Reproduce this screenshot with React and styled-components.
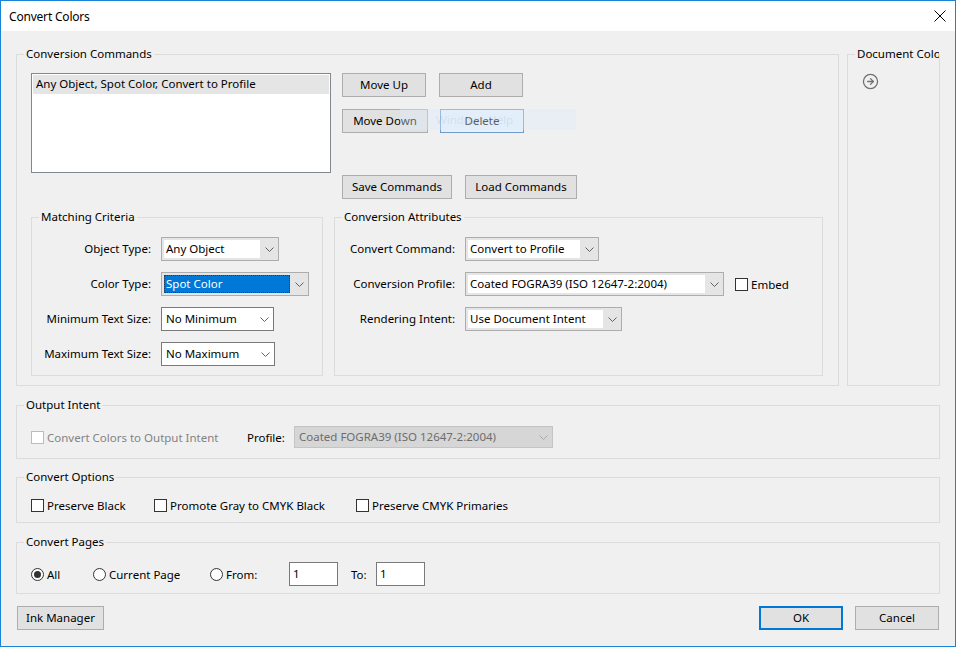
import React from 'react';
import styled, { createGlobalStyle } from 'styled-components';
import { CircleArrowRight } from 'lucide-react';

const GlobalStyle = createGlobalStyle`
  html, body { margin: 0; padding: 0; background: #f0f0f0; }
  body {
    font-family: "Noto Sans", "Open Sans", sans-serif;
    font-size: 11.5px;
    color: #000;
  }
  * { box-sizing: border-box; }
`;

const Window = styled.div`
  width: 956px;
  height: 647px;
  border: 1px solid #1883d7;
  background: #f0f0f0;
  display: flex;
  flex-direction: column;
  overflow: hidden;
`;

const TitleBar = styled.div`
  height: 30px;
  flex-shrink: 0;
  background: #fff;
  display: flex;
  align-items: center;
  justify-content: space-between;
  padding: 0 9px 0 8px;
`;

const Title = styled.span`
  font-size: 12px;
  letter-spacing: -0.2px;
`;

const Body = styled.div`
  flex: 1;
  display: flex;
  flex-direction: column;
  padding: 15px 15px 0 15px;
`;

const TopRow = styled.div`
  display: flex;
  gap: 8px;
  height: 340px;
`;

const Group = styled.fieldset`
  margin: ${p => p.$mt || 0}px 0 0 0;
  padding: 0;
  border: 1px solid #dcdcdc;
  min-width: 0;
  width: ${p => (p.$w ? `${p.$w}px` : 'auto')};
  height: ${p => (p.$h ? `${p.$h}px` : 'auto')};
  flex-shrink: 0;
`;

const Legend = styled.legend`
  margin-left: 7px;
  padding: 0 2px;
  line-height: 16px;
  font-size: 11.5px;
  white-space: nowrap;
  overflow: hidden;
  max-width: calc(100% - 7px);
`;

const CommandsInner = styled.div`
  display: flex;
  flex-direction: column;
  padding: 11px 15px 8px 14px;
`;

const CommandsTop = styled.div`
  display: flex;
  gap: 11px;
`;

const ListBox = styled.div`
  width: 300px;
  height: 100px;
  background: #fff;
  border: 1px solid #828790;
  padding: 1px;
`;

const ListItem = styled.div`
  height: 19px;
  line-height: 18px;
  padding-left: 3px;
  background: ${p => (p.$selected ? '#e5e5e5' : 'transparent')};
`;

const ButtonColumn = styled.div`
  display: flex;
  flex-direction: column;
`;

const ButtonRow = styled.div`
  position: relative;
  display: flex;
  gap: 13px;
  margin-top: ${p => p.$mt || 0}px;
`;

const Button = styled.button`
  width: ${p => p.$w}px;
  height: 24px;
  padding: 0 0 1px 0;
  font: inherit;
  color: #000;
  background: ${p => (p.$hover ? '#e5f1fb' : '#e1e1e1')};
  border: ${p => (p.$default ? '2px solid #0078d7' : `1px solid ${p.$hover ? '#6f9ccb' : '#adadad'}`)};
  margin-left: ${p => p.$ml || 0}px;
`;

const GhostTip = styled.div`
  position: absolute;
  left: 58px;
  top: 0;
  width: 176px;
  height: 21px;
  padding-left: 36px;
  line-height: 21px;
  background: rgba(222, 236, 250, 0.4);
  color: rgba(90, 110, 130, 0.14);
  pointer-events: none;
`;

const SubRow = styled.div`
  display: flex;
  gap: 11px;
  margin-top: 10px;
`;

const FormRows = styled.div`
  display: flex;
  flex-direction: column;
  gap: 11px;
  padding: 12px 0 0 1px;
`;

const FormRow = styled.div`
  display: flex;
  align-items: center;
  height: 24px;
`;

const FieldLabel = styled.span`
  width: ${p => p.$w}px;
  margin-right: 10px;
  padding-bottom: 1px;
  text-align: right;
  white-space: nowrap;
`;

const SelectBox = styled.div`
  width: ${p => p.$w}px;
  height: ${p => p.$h || 24}px;
  display: flex;
  border: 1px solid
    ${p => (p.$variant === 'list' ? '#7a7a7a' : p.$variant === 'disabled' ? '#c4c4c4' : '#adadad')};
  background: ${p => (p.$variant === 'list' ? '#fff' : p.$variant === 'disabled' ? '#d6d6d6' : '#e5e5e5')};
  padding: ${p => (p.$variant === 'combo' ? '2px 0 2px 2px' : '0')};
  color: ${p => (p.$variant === 'disabled' ? '#6d6d6d' : '#000')};
`;

const SelectValue = styled.div`
  flex: 1;
  display: flex;
  align-items: center;
  white-space: nowrap;
  overflow: hidden;
  padding: 0 0 1px ${p => (p.$plain ? 3 : 1)}px;
  background: ${p => (p.$focused ? '#0078d7' : p.$plain ? 'transparent' : '#fff')};
  color: ${p => (p.$focused ? '#fff' : 'inherit')};
  border: 1px ${p => (p.$focused ? 'dotted #1b3f66' : 'solid transparent')};
`;

const ArrowArea = styled.div`
  width: 18px;
  display: flex;
  align-items: center;
  justify-content: center;
`;

const Chevron = ({ color = '#606060' }) => (
  <svg width="9" height="5" viewBox="0 0 9 5">
    <polyline points="0.5,0.5 4.5,4.5 8.5,0.5" fill="none" stroke={color} strokeWidth="1" />
  </svg>
);

const Select = ({ value, w, h, variant = 'combo', focused }) => (
  <SelectBox $w={w} $h={h} $variant={variant}>
    <SelectValue $plain={variant !== 'combo'} $focused={focused}>{value}</SelectValue>
    <ArrowArea>
      <Chevron color={variant === 'disabled' ? '#a8a8a8' : '#606060'} />
    </ArrowArea>
  </SelectBox>
);

const CheckLabel = styled.label`
  display: flex;
  align-items: center;
  gap: 3px;
  width: ${p => (p.$w ? `${p.$w}px` : 'auto')};
  flex-shrink: 0;
  white-space: nowrap;
  color: ${p => (p.$disabled ? '#838383' : '#000')};
  margin-left: ${p => p.$ml || 0}px;
`;

const Box = styled.span`
  width: 13px;
  height: 13px;
  flex-shrink: 0;
  background: #fff;
  border: 1px solid ${p => (p.$disabled ? '#bcbcbc' : '#333')};
`;

const Radio = styled.span`
  width: 13px;
  height: 13px;
  flex-shrink: 0;
  border-radius: 50%;
  border: 1px solid #333;
  background: #fff;
  display: flex;
  align-items: center;
  justify-content: center;
  &::after {
    content: '';
    width: 7px;
    height: 7px;
    border-radius: 50%;
    background: ${p => (p.$checked ? '#333' : 'transparent')};
  }
`;

const DocInner = styled.div`
  padding: 11px 0 0 14px;
  color: #707070;
  display: flex;
`;

const LineInner = styled.div`
  display: flex;
  align-items: center;
  height: ${p => p.$h}px;
  margin: ${p => p.$pt}px 0 ${p => p.$pb}px 14px;
`;

const PlainLabel = styled.span`
  width: ${p => (p.$w ? `${p.$w}px` : 'auto')};
  padding-left: ${p => p.$pl || 0}px;
  flex-shrink: 0;
  white-space: nowrap;
`;

const TextInput = styled.div`
  width: 49px;
  height: 24px;
  background: #fff;
  border: 1px solid #7a7a7a;
  padding-left: 3px;
  line-height: 21px;
  flex-shrink: 0;
`;

const Footer = styled.div`
  display: flex;
  align-items: center;
  gap: 12px;
  margin-top: 12px;
  padding: 0 1px;
`;

const Spacer = styled.div`
  flex: 1;
`;

const CloseIcon = () => (
  <svg width="12" height="12" viewBox="0 0 12 12">
    <line x1="0.5" y1="0.5" x2="11.5" y2="11.5" stroke="#000" strokeWidth="1" />
    <line x1="11.5" y1="0.5" x2="0.5" y2="11.5" stroke="#000" strokeWidth="1" />
  </svg>
);

const App = () => (
  <Window>
    <GlobalStyle />
    <TitleBar>
      <Title>Convert Colors</Title>
      <CloseIcon />
    </TitleBar>
    <Body>
      <TopRow>
        <Group $w={823}>
          <Legend>Conversion Commands</Legend>
          <CommandsInner>
            <CommandsTop>
              <ListBox>
                <ListItem $selected>Any Object, Spot Color, Convert to Profile</ListItem>
              </ListBox>
              <ButtonColumn>
                <ButtonRow>
                  <Button $w={84}>Move Up</Button>
                  <Button $w={84}>Add</Button>
                </ButtonRow>
                <ButtonRow $mt={12}>
                  <Button $w={86}>Move Down</Button>
                  <Button $w={84} $hover $ml={-1}>Delete</Button>
                  <GhostTip>Windows Help</GhostTip>
                </ButtonRow>
                <ButtonRow $mt={42}>
                  <Button $w={110}>Save Commands</Button>
                  <Button $w={112}>Load Commands</Button>
                </ButtonRow>
              </ButtonColumn>
            </CommandsTop>
            <SubRow>
              <Group $w={292} $h={167}>
                <Legend>Matching Criteria</Legend>
                <FormRows>
                  <FormRow>
                    <FieldLabel $w={118}>Object Type:</FieldLabel>
                    <Select w={118} value="Any Object" />
                  </FormRow>
                  <FormRow>
                    <FieldLabel $w={118}>Color Type:</FieldLabel>
                    <Select w={148} value="Spot Color" focused />
                  </FormRow>
                  <FormRow>
                    <FieldLabel $w={118}>Minimum Text Size:</FieldLabel>
                    <Select w={113} variant="list" value="No Minimum" />
                  </FormRow>
                  <FormRow>
                    <FieldLabel $w={118}>Maximum Text Size:</FieldLabel>
                    <Select w={114} variant="list" value="No Maximum" />
                  </FormRow>
                </FormRows>
              </Group>
              <Group $w={489} $h={167}>
                <Legend>Conversion Attributes</Legend>
                <FormRows>
                  <FormRow>
                    <FieldLabel $w={119}>Convert Command:</FieldLabel>
                    <Select w={134} value="Convert to Profile" />
                  </FormRow>
                  <FormRow>
                    <FieldLabel $w={119}>Conversion Profile:</FieldLabel>
                    <Select w={259} value="Coated FOGRA39 (ISO 12647-2:2004)" />
                    <CheckLabel $ml={11}>
                      <Box />
                      Embed
                    </CheckLabel>
                  </FormRow>
                  <FormRow>
                    <FieldLabel $w={119}>Rendering Intent:</FieldLabel>
                    <Select w={157} value="Use Document Intent" />
                  </FormRow>
                </FormRows>
              </Group>
            </SubRow>
          </CommandsInner>
        </Group>
        <Group $w={93}>
          <Legend>Document Colors</Legend>
          <DocInner>
            <CircleArrowRight size={17} strokeWidth={1.8} />
          </DocInner>
        </Group>
      </TopRow>

      <Group $mt={11} $h={62}>
        <Legend>Output Intent</Legend>
        <LineInner $h={22} $pt={13} $pb={9}>
          <CheckLabel $w={216} $disabled>
            <Box $disabled />
            Convert Colors to Output Intent
          </CheckLabel>
          <PlainLabel $w={47}>Profile:</PlainLabel>
          <Select w={259} h={22} variant="disabled" value="Coated FOGRA39 (ISO 12647-2:2004)" />
        </LineInner>
      </Group>

      <Group $mt={10} $h={54}>
        <Legend>Convert Options</Legend>
        <LineInner $h={16} $pt={12} $pb={9}>
          <CheckLabel $w={123}>
            <Box />
            Preserve Black
          </CheckLabel>
          <CheckLabel $w={202}>
            <Box />
            Promote Gray to CMYK Black
          </CheckLabel>
          <CheckLabel>
            <Box />
            Preserve CMYK Primaries
          </CheckLabel>
        </LineInner>
      </Group>

      <Group $mt={11} $h={60}>
        <Legend>Convert Pages</Legend>
        <LineInner $h={24} $pt={12} $pb={7}>
          <CheckLabel $w={62}>
            <Radio $checked />
            All
          </CheckLabel>
          <CheckLabel $w={117}>
            <Radio />
            Current Page
          </CheckLabel>
          <CheckLabel $w={79}>
            <Radio />
            From:
          </CheckLabel>
          <TextInput>1</TextInput>
          <PlainLabel $w={38} $pl={13}>To:</PlainLabel>
          <TextInput>1</TextInput>
        </LineInner>
      </Group>

      <Footer>
        <Button $w={87}>Ink Manager</Button>
        <Spacer />
        <Button $w={84} $default>OK</Button>
        <Button $w={84}>Cancel</Button>
      </Footer>
    </Body>
  </Window>
);

export default App;
